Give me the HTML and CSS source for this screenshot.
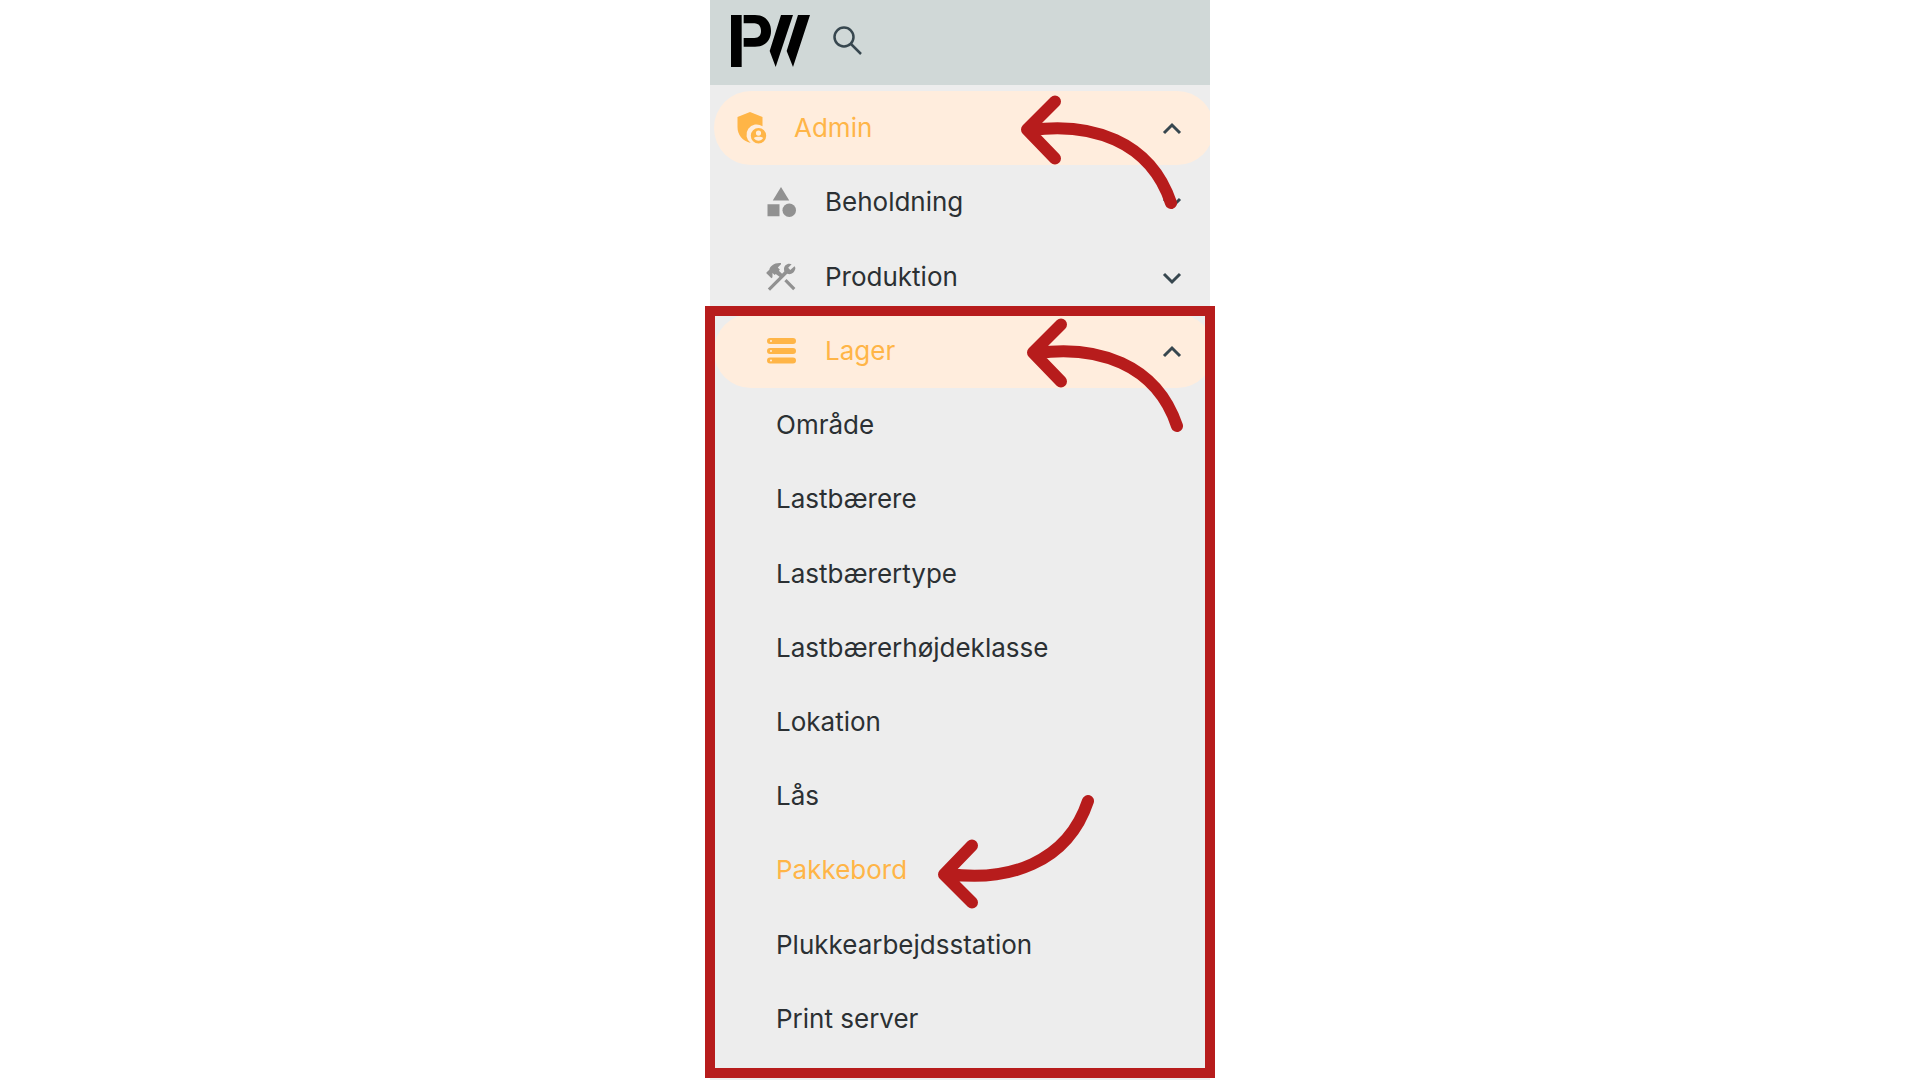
FILE: index.html
```html
<!DOCTYPE html>
<html lang="da">
<head>
<meta charset="utf-8">
<meta name="viewport" content="width=device-width, initial-scale=1">
<title>Pakkebord</title>
<link rel="stylesheet" href="styles.css">
</head>
<body>
<svg class="defs" aria-hidden="true">
  <symbol id="up" viewBox="0 0 24 24"><path d="M4 17 12 9l8 8"/></symbol>
  <symbol id="down" viewBox="0 0 24 24"><path d="M4 9l8 8 8-8"/></symbol>
  <symbol id="arrow" viewBox="0 0 160 120"><path d="M11 35C70 27 130 45 151 108M35 6.500 7 34.500l28 29"/></symbol>
</svg>
<aside class="sidebar">
  <header class="topbar">
    <svg class="logo" viewBox="92 46 237 156" role="img" aria-label="PW">
      <path d="M92 46h32v156H92zM130 46h34c30 0 48 20 48 48s-18 47-48 47h-34v-26h32c14 0 20-9 20-21s-6-23-20-23h-32zM242 46h36l-52 156-18-48zM293 46h36l-51 156-19-48z"/>
    </svg>
    <button class="search" type="button" aria-label="Søg">
      <svg viewBox="0 0 32 32"><circle cx="12" cy="12" r="9.500"/><path d="M18.500 18.500 29 29"/></svg>
    </button>
  </header>
  <nav class="menu">
    <div class="item">
      <div class="clip">
        <button class="row pill" type="button" aria-expanded="true">
          <svg class="icon" viewBox="0 0 36 36"><path d="M5.500 7 18 2l12.500 5v9.300A9.700 9.700 0 0 0 18.800 33C10.500 31 5.500 25 5.500 17z"/><path fill-rule="evenodd" d="M26.500 18a7.700 7.700 0 1 1 0 15.400 7.700 7.700 0 0 1 0-15.400zm0 2.500a2.600 2.600 0 1 0 0 5.200 2.600 2.600 0 0 0 0-5.200zm-4.700 7.500a5.500 5.500 0 0 0 9.400 0c-1.500-1.600-7.900-1.600-9.400 0z"/></svg>
          <span class="label">Admin</span>
          <svg class="chevron"><use href="#up"/></svg>
        </button>
      </div>
      <svg class="arrow"><use href="#arrow"/></svg>
    </div>
    <div class="item">
      <button class="row nested" type="button" aria-expanded="false">
        <svg class="icon" viewBox="0 0 24 24"><path d="m12 2-5.500 9h11zM3 13.500h8v8H3z"/><circle cx="17.500" cy="17.500" r="4.500"/></svg>
        <span class="label">Beholdning</span>
        <svg class="chevron"><use href="#down"/></svg>
      </button>
    </div>
    <div class="item">
      <button class="row nested" type="button" aria-expanded="false">
        <svg class="icon" viewBox="0 0 24 24"><path d="M14.200 14.900L20.100 20.800L21.600 19.300L15.700 13.400ZM17.500 10.100C17.110 10.100 16.690 10.050 16.100 9.900L4.700 21.200L3.200 19.700L11 11.900L8.500 9.960L7.780 10.660L6.330 9.250V12.110L5.630 12.810L2.110 9.250L2.810 8.550L4.220 7.140C4.600 4.800 7.500 2.300 12 2.700L12 3.580L9.890 5.740L11.300 7.140L10.590 7.850L12.700 9.900L14.200 8.400C14.060 7.420 14 7 14 6.630C14 4.660 15.560 3.110 17.500 3.110C18.090 3.110 18.610 3.250 19.080 3.530L16.800 5.900L18.200 7.300L20.980 4.800C21.600 5.500 21.700 6 21.500 6.630C21 8.550 19.450 10.100 17.500 10.100Z"/></svg>
        <span class="label">Produktion</span>
        <svg class="chevron"><use href="#down"/></svg>
      </button>
    </div>
    <div class="group">
      <div class="item">
        <div class="clip">
          <button class="row pill nested" type="button" aria-expanded="true">
            <svg class="icon" viewBox="0 0 36 36"><path fill-rule="evenodd" d="M7 5h23a3 3 0 0 1 0 6H7a3 3 0 0 1 0-6zm1 2a1 1 0 1 0 0 2 1 1 0 0 0 0-2zM7 15h23a3 3 0 0 1 0 6H7a3 3 0 0 1 0-6zm1 2a1 1 0 1 0 0 2 1 1 0 0 0 0-2zM7 24.500h23a3 3 0 0 1 0 6H7a3 3 0 0 1 0-6zm1 2a1 1 0 1 0 0 2 1 1 0 0 0 0-2z"/></svg>
            <span class="label">Lager</span>
            <svg class="chevron"><use href="#up"/></svg>
          </button>
        </div>
        <svg class="arrow arrow-lager"><use href="#arrow"/></svg>
      </div>
      <div class="item"><a class="row sub" href="#omraade">Område</a></div>
      <div class="item"><a class="row sub" href="#lastbaerere">Lastbærere</a></div>
      <div class="item"><a class="row sub" href="#lastbaerertype">Lastbærertype</a></div>
      <div class="item"><a class="row sub" href="#hoejdeklasse">Lastbærerhøjdeklasse</a></div>
      <div class="item"><a class="row sub" href="#lokation">Lokation</a></div>
      <div class="item"><a class="row sub" href="#laas">Lås</a></div>
      <div class="item">
        <a class="row sub active" href="#pakkebord" aria-current="page">Pakkebord</a>
        <svg class="arrow arrow-up"><use href="#arrow"/></svg>
      </div>
      <div class="item"><a class="row sub" href="#plukkearbejdsstation">Plukkearbejdsstation</a></div>
      <div class="item"><a class="row sub" href="#printserver">Print server</a></div>
    </div>
  </nav>
</aside>
</body>
</html>
```
FILE: styles.css
```css
* { box-sizing: border-box; }

body {
  margin: 0;
  background: #fff;
  color: #2b3033;
  font: 26px/32px Inter, "Liberation Sans", sans-serif;
}

button {
  border: 0;
  background: none;
  color: inherit;
  font: inherit;
  text-align: left;
}

.defs { display: none; }

.sidebar {
  display: flex;
  flex-direction: column;
  width: 100%;
  max-width: 500px;
  min-height: 100vh;
  margin: 0 auto;
  background: #ededed;
}

.topbar {
  display: flex;
  align-items: center;
  gap: 22px;
  height: 85px;
  padding: 0 21px 3px;
  background: #d0d8d7;
}

.logo { width: 79px; height: 52px; }

.search { padding: 0; line-height: 0; }

.search svg {
  width: 32px;
  height: 32px;
  fill: none;
  stroke: #37474f;
  stroke-width: 2.5;
}

/* All rows share the remaining height equally */
.menu {
  display: flex;
  flex: 1;
  flex-direction: column;
  padding: 6px 0 24px;
}

.item {
  position: relative;
  display: flex;
  flex: 1 0 0;
  min-height: 48px;
}

.group {
  position: relative;
  display: flex;
  flex: 10 0 0;
  flex-direction: column;
}

/* Highlight frame around the open group */
.group::after {
  content: "";
  position: absolute;
  inset: -8px -5px -22px;
  border: 10px solid #b71c1c;
  pointer-events: none;
}

.clip {
  display: flex;
  flex: 1;
  overflow: hidden;
}

.row {
  display: flex;
  flex: 1;
  align-items: center;
  gap: 26px;
  padding: 0 26px 0 23px;
  text-decoration: none;
  color: inherit;
}

.nested { padding-left: 53px; }

.pill {
  margin: 0 -4px 0 4px;
  padding-left: 18px;
  padding-right: 30px;
  border-radius: 37px;
  background: #ffeddd;
  color: #ffb547;
}

.pill.nested { padding-left: 49px; }

.sub { padding-left: 66px; }

.active { color: #ffb547; }

.label { flex: 1; }

.icon {
  width: 36px;
  height: 36px;
  fill: #919191;
}

.pill .icon { fill: #ffb547; }

.chevron {
  width: 24px;
  height: 24px;
  fill: none;
  stroke: #37474f;
  stroke-width: 3;
}

.arrow {
  position: absolute;
  z-index: 1;
  top: 4px;
  right: 30px;
  width: 160px;
  height: 120px;
  fill: none;
  stroke: #b71c1c;
  stroke-width: 12;
  stroke-linecap: round;
  stroke-linejoin: round;
  pointer-events: none;
}

.arrow-lager { right: 24px; }

.arrow-up {
  top: auto;
  right: 113px;
  bottom: -1px;
  transform: scaleY(-1);
}
```
